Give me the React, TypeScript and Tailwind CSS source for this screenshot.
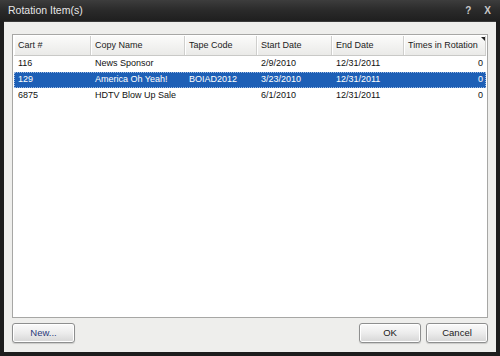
import React from "react";

const cols = [
  { name: "Cart #", w: 77 },
  { name: "Copy Name", w: 94 },
  { name: "Tape Code", w: 72 },
  { name: "Start Date", w: 75 },
  { name: "End Date", w: 72 },
  { name: "Times in Rotation", w: 82 },
];

const rows = [
  ["116", "News Sponsor", "", "2/9/2010", "12/31/2011", "0"],
  ["129", "America Oh Yeah!", "BOIAD2012", "3/23/2010", "12/31/2011", "0"],
  ["6875", "HDTV Blow Up Sale", "", "6/1/2010", "12/31/2011", "0"],
];

function Btn({ label, w, blue }: { label: string; w: string; blue?: boolean }) {
  return (
    <button
      className={`${w} h-[20px] rounded-[3px] border border-[#8e8f8f] bg-gradient-to-b from-[#fbfbfb] via-[#ececec] to-[#d6d6d6] text-[9.5px] shadow-[inset_0_0_0_1px_#ffffff,0_1px_1px_rgba(0,0,0,0.15)] ${blue ? "text-[#2a3a7a]" : "text-[#1a1a1a]"}`}
    >
      {label}
    </button>
  );
}

export default function App() {
  return (
    <div
      className="w-[500px] h-[356px] bg-[#1d1d1d] flex flex-col"
      style={{ fontFamily: '"Liberation Sans", Arial, sans-serif' }}
    >
      <div className="h-[22px] flex items-center justify-between pl-[8px] pr-[9px] bg-gradient-to-b from-[#3d3d3d] via-[#2a2a2a] to-[#1f1f1f] text-[#e6e6e6]">
        <span className="text-[10.5px] leading-none">Rotation Item(s)</span>
        <div className="flex items-center gap-[13px] text-[10px] font-bold text-[#c8c8c8]">
          <span>?</span>
          <span>X</span>
        </div>
      </div>
      <div className="flex-1 mx-[4px] mb-[4px] bg-[#eeeeec] flex flex-col px-[8px] pt-[12px] pb-[9px] border-t border-[#3a3a3a]">
        <div className="h-[284px] border border-[#a7a7a5] bg-white p-[1px] relative">
          <div className="flex h-[20px] bg-gradient-to-b from-[#fbfbfa] to-[#eaeae8] border-b border-[#c9c9c7]">
            {cols.map((c, i) => (
              <div
                key={i}
                style={{ width: c.w }}
                className="h-full flex items-center pl-[4px] text-[9px] text-[#222] border-r border-[#cfcfcd] shadow-[inset_1px_0_0_#ffffff]"
              >
                {c.name}
              </div>
            ))}
          </div>
          <div className="absolute right-[2px] top-[2px] w-0 h-0 border-l-[4px] border-l-transparent border-t-[4px] border-t-[#222]" />
          {rows.map((r, ri) => {
            const sel = ri === 1;
            return (
              <div
                key={ri}
                className={`flex h-[16px] ${sel ? "bg-[#1d5fb6] text-white outline outline-1 outline-dotted outline-[#9bb8e0] -outline-offset-1" : "text-[#111]"}`}
              >
                {r.map((v, ci) => (
                  <div
                    key={ci}
                    style={{ width: cols[ci].w }}
                    className={`h-full flex items-center text-[9px] ${ci === 5 ? "justify-end pr-[3px]" : "pl-[4px]"}`}
                  >
                    {v}
                  </div>
                ))}
              </div>
            );
          })}
        </div>
        <div className="flex mt-[5px]">
          <Btn label="New..." w="w-[63px]" blue />
          <div className="flex-1" />
          <Btn label="OK" w="w-[62px]" />
          <div className="w-[5px]" />
          <Btn label="Cancel" w="w-[62px]" />
        </div>
      </div>
    </div>
  );
}
